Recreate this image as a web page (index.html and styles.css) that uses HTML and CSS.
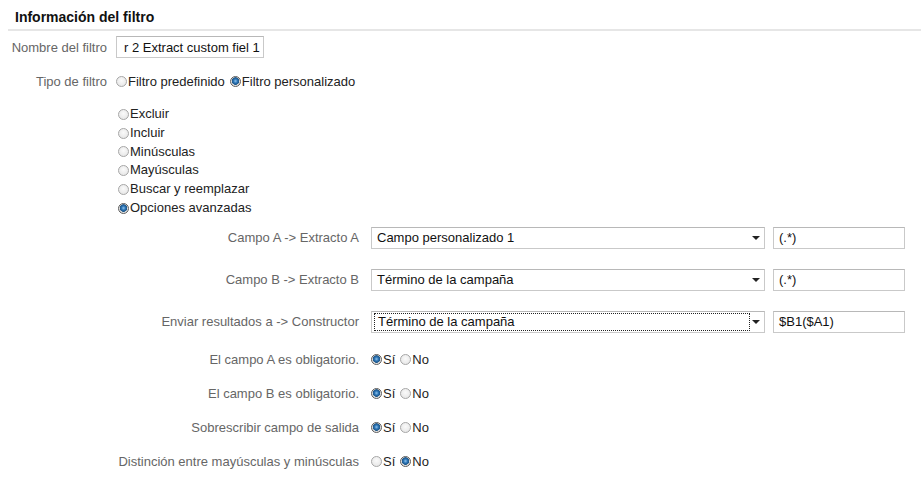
FILE: index.html
```html
<!DOCTYPE html>
<html lang="es">
<head>
  <meta charset="UTF-8">
  <meta name="viewport" content="width=device-width, initial-scale=1.0">
  <title>Información del filtro</title>
  <link rel="stylesheet" href="styles.css">
</head>
<body>
  <div class="panel">
    <h2 class="panel-title">Información del filtro</h2>

    <div class="row name-row">
      <span class="label">Nombre del filtro</span>
      <span class="field name-field">r 2 Extract custom fiel 1</span>
    </div>

    <div class="row type-row">
      <span class="label">Tipo de filtro</span>
      <label class="choice"><input type="radio" name="tipo">Filtro predefinido</label>
      <label class="choice"><input type="radio" name="tipo" checked>Filtro personalizado</label>
    </div>

    <ul class="kinds">
      <li><label class="choice"><input type="radio" name="kind">Excluir</label></li>
      <li><label class="choice"><input type="radio" name="kind">Incluir</label></li>
      <li><label class="choice"><input type="radio" name="kind">Minúsculas</label></li>
      <li><label class="choice"><input type="radio" name="kind">Mayúsculas</label></li>
      <li><label class="choice"><input type="radio" name="kind">Buscar y reemplazar</label></li>
      <li><label class="choice"><input type="radio" name="kind" checked>Opciones avanzadas</label></li>
    </ul>

    <div class="advanced">
      <div class="adv-row">
        <span class="adv-label">Campo A -&gt; Extracto A</span>
        <span class="select"><span class="select-text">Campo personalizado 1</span><span class="arrow"></span></span>
        <span class="field pattern">(.*)</span>
      </div>
      <div class="adv-row">
        <span class="adv-label">Campo B -&gt; Extracto B</span>
        <span class="select"><span class="select-text">Término de la campaña</span><span class="arrow"></span></span>
        <span class="field pattern">(.*)</span>
      </div>
      <div class="adv-row">
        <span class="adv-label">Enviar resultados a -&gt; Constructor</span>
        <span class="select focused"><span class="select-text">Término de la campaña</span><span class="arrow"></span></span>
        <span class="field pattern">$B1($A1)</span>
      </div>

      <div class="opt-row first">
        <span class="adv-label">El campo A es obligatorio.</span>
        <label class="choice"><input type="radio" name="a" checked>Sí</label>
        <label class="choice"><input type="radio" name="a">No</label>
      </div>
      <div class="opt-row">
        <span class="adv-label">El campo B es obligatorio.</span>
        <label class="choice"><input type="radio" name="b" checked>Sí</label>
        <label class="choice"><input type="radio" name="b">No</label>
      </div>
      <div class="opt-row">
        <span class="adv-label">Sobrescribir campo de salida</span>
        <label class="choice"><input type="radio" name="c" checked>Sí</label>
        <label class="choice"><input type="radio" name="c">No</label>
      </div>
      <div class="opt-row">
        <span class="adv-label">Distinción entre mayúsculas y minúsculas</span>
        <label class="choice"><input type="radio" name="d">Sí</label>
        <label class="choice"><input type="radio" name="d" checked>No</label>
      </div>
    </div>
  </div>
</body>
</html>
```

FILE: styles.css
```css
/* Basic styling */
body {
  font-family: "Liberation Sans", Arial, sans-serif;
  font-size: 13px;
  color: #222;
  margin: 0;
  padding: 0;
  background-color: #fff;
}
.panel {
  margin-left: 8px;
}
.panel-title {
  margin: 0;
  padding: 9px 0 4px 7px;
  font-size: 14px;
  line-height: 16px;
  font-weight: bold;
  color: #111;
  border-bottom: 2px solid #e6e6e6;
}
.row {
  display: flex;
  align-items: center;
  height: 22px;
}
.name-row {
  margin-top: 5px;
}
.type-row {
  margin-top: 12px;
}
.label {
  width: 99px;
  margin-right: 9px;
  text-align: right;
  color: #666;
}
.field {
  display: flex;
  align-items: center;
  box-sizing: border-box;
  height: 22px;
  border: 1px solid #c9c9c9;
  border-top-color: #b8b8b8;
  background-color: #fff;
  padding: 0 5px;
  color: #111;
  white-space: nowrap;
  overflow: hidden;
}
.name-field {
  width: 148px;
  padding-left: 7px;
}
.choice {
  display: inline-flex;
  align-items: center;
  color: #222;
  margin-right: 5px;
}
.choice input {
  appearance: none;
  -webkit-appearance: none;
  box-sizing: border-box;
  width: 11px;
  height: 11px;
  margin: 0 1px 0 0;
  border-radius: 50%;
  border: 1px solid #a6a6a6;
  background: radial-gradient(circle at 50% 40%, #fafafa 0, #e2e2e2 100%);
}
.choice input:checked {
  border-color: #5c5c5c;
  background: radial-gradient(circle at 50% 45%, #8cc4ee 0, #2b72b3 2px, #1d5688 3.5px, #dcdcdc 4px, #f4f4f4 100%);
}
.kinds {
  list-style: none;
  margin: 13px 0 0 110px;
  padding: 0;
}
.kinds li {
  line-height: 18.8px;
  height: 18.8px;
  display: flex;
  align-items: center;
}
.advanced {
  margin-top: 9px;
}
.adv-row,
.opt-row {
  display: flex;
  align-items: center;
  height: 22px;
}
.adv-row + .adv-row {
  margin-top: 20px;
}
.opt-row {
  margin-top: 12px;
}
.opt-row.first {
  margin-top: 16px;
}
.adv-label {
  width: 351px;
  margin-right: 12px;
  text-align: right;
  color: #666;
  white-space: nowrap;
}
.select {
  position: relative;
  display: flex;
  align-items: center;
  box-sizing: border-box;
  width: 394px;
  height: 22px;
  border: 1px solid #c9c9c9;
  border-top-color: #b8b8b8;
  background-color: #fff;
  color: #111;
  margin-right: 8px;
}
.select-text {
  padding-left: 5px;
}
.select.focused .select-text {
  box-sizing: border-box;
  width: 376px;
  height: 18px;
  margin-left: 2px;
  padding-left: 3px;
  line-height: 16px;
  border: 1px dotted #222;
}
.arrow {
  position: absolute;
  right: 4px;
  top: 8px;
  width: 0;
  height: 0;
  border-left: 4px solid transparent;
  border-right: 4px solid transparent;
  border-top: 4px solid #222;
}
.pattern {
  width: 132px;
}
```
